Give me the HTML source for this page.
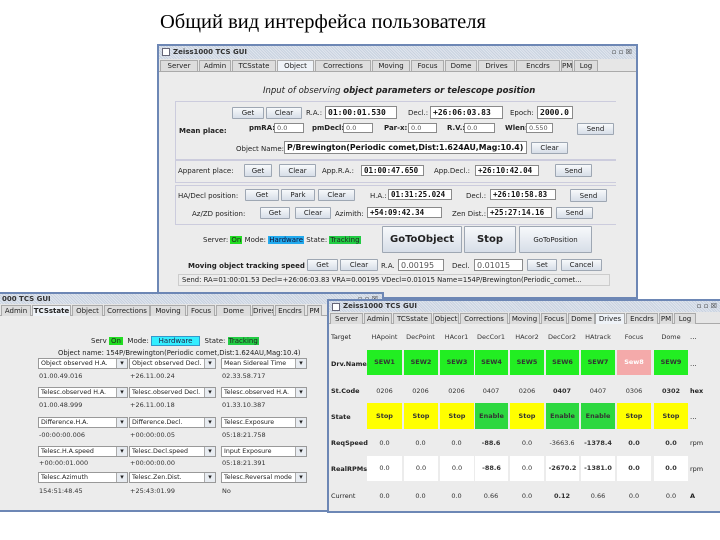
<!DOCTYPE html>
<html><head><meta charset="utf-8"><style>
*{margin:0;padding:0;box-sizing:border-box}
body{width:720px;height:540px;background:#fff;position:relative;overflow:hidden;font-family:"DejaVu Sans","Liberation Sans",sans-serif;font-size:7px;color:#222}
div,span{position:absolute;white-space:nowrap}
.win{background:#ececec;border:2px solid #6d87b5}
.tb{background:repeating-linear-gradient(45deg,#c9d2df 0 1px,#dfe5ee 1px 2px);color:#333;font-weight:bold;font-size:7px;line-height:11px;padding-left:14px}
.tb i{position:absolute;left:3px;top:2px;width:8px;height:8px;background:#fff;border:1px solid #667}
.tabs{background:#e6e6e6;border-bottom:1px solid #aaa}
.tab{top:1px;height:11px;border:1px solid #aaa;border-bottom:none;background:#ddd;font-size:7px;line-height:10px;text-align:center;overflow:hidden}
.tab.s{background:#eef2f7;font-weight:normal}
.b{border:1px solid #9ea7b3;background:linear-gradient(#f7f9fb,#d7dee8);text-align:center;font-size:7px;border-radius:1px}
.f{background:#fff;border:1px solid #8a8a8a;font-size:6.5px;padding-left:2px;color:#555;overflow:hidden}
.fb{font-weight:bold;font-size:8px;color:#111;font-family:"DejaVu Sans Mono","Liberation Mono",monospace}
.c{background:#fff;border:1px solid #999;font-size:6.3px;padding-left:2px;line-height:10px;overflow:hidden}
.c:after{content:"▾";position:absolute;right:0;top:0;width:10px;height:9px;border-left:1px solid #aaa;text-align:center;background:#e8ecf1;font-size:7px;line-height:9px}
.v{font-size:6.5px;color:#333}
.cell{text-align:center;font-size:6.5px;font-weight:bold;color:#333}
.g{background:#22ee22}.y{background:#ffff00}
</style></head><body>
<div style="left:160px;top:11px;font-family:'Liberation Serif',serif;font-size:20.5px;color:#000">Общий вид интерфейса пользователя</div>

<!-- main window -->
<div class="win" style="left:157px;top:44px;width:481px;height:255px">
<div class="tb" style="left:0;top:0;width:477px;height:13px;line-height:13px"><i></i>Zeiss1000 TCS GUI<span style="right:4px;top:0;font-weight:normal">▫ ▫ ☒</span></div>
<div class="tabs" style="left:0;top:13px;width:477px;height:13px">
<span class="tab" style="left:1px;width:38px">Server</span><span class="tab" style="left:40px;width:32px">Admin</span><span class="tab" style="left:73px;width:44px">TCSstate</span><span class="tab s" style="left:118px;width:37px">Object</span><span class="tab" style="left:156px;width:56px">Corrections</span><span class="tab" style="left:213px;width:38px">Moving</span><span class="tab" style="left:252px;width:33px">Focus</span><span class="tab" style="left:286px;width:32px">Dome</span><span class="tab" style="left:319px;width:37px">Drives</span><span class="tab" style="left:357px;width:44px">Encdrs</span><span class="tab" style="left:402px;width:12px">PM</span><span class="tab" style="left:415px;width:24px">Log</span>
</div>
</div>
<div style="left:263px;top:86px;font-style:italic;font-size:8.5px;color:#222">Input of observing <b>object parameters or telescope position</b></div>
<div style="left:175px;top:101px;width:441px;height:59px;border:1px solid #ccd;border-right:none"></div>
<div class="b" style="left:232px;top:107px;width:32px;height:12px;line-height:11px">Get</div>
<div class="b" style="left:266px;top:107px;width:36px;height:12px;line-height:11px">Clear</div>
<div style="left:306px;top:109px">R.A.:</div>
<div class="f fb" style="left:325px;top:106px;width:72px;height:13px;line-height:12px">01:00:01.530</div>
<div style="left:408px;top:109px">Decl.:</div>
<div class="f fb" style="left:430px;top:106px;width:73px;height:13px;line-height:12px">+26:06:03.83</div>
<div style="left:510px;top:109px">Epoch:</div>
<div class="f fb" style="left:537px;top:106px;width:36px;height:13px;line-height:12px">2000.0</div>
<div style="left:179px;top:127px;font-weight:bold">Mean place:</div>
<div style="left:249px;top:124px;font-weight:bold">pmRA:</div><div class="f" style="left:274px;top:123px;width:30px;height:10px;line-height:9px">0.0</div>
<div style="left:312px;top:124px;font-weight:bold">pmDecl:</div><div class="f" style="left:343px;top:123px;width:30px;height:10px;line-height:9px">0.0</div>
<div style="left:384px;top:124px;font-weight:bold">Par-x:</div><div class="f" style="left:408px;top:123px;width:29px;height:10px;line-height:9px">0.0</div>
<div style="left:447px;top:124px;font-weight:bold">R.V.:</div><div class="f" style="left:464px;top:123px;width:31px;height:10px;line-height:9px">0.0</div>
<div style="left:505px;top:124px;font-weight:bold">Wlen:</div><div class="f" style="left:526px;top:123px;width:27px;height:10px;line-height:9px">0.550</div>
<div class="b" style="left:577px;top:123px;width:37px;height:12px;line-height:11px">Send</div>
<div style="left:236px;top:145px">Object Name:</div>
<div class="f" style="left:284px;top:141px;width:243px;height:13px;line-height:12px;font-weight:bold;font-size:7.8px;color:#111">P/Brewington(Periodic comet,Dist:1.624AU,Mag:10.4)</div>
<div class="b" style="left:531px;top:142px;width:37px;height:12px;line-height:11px">Clear</div>
<div style="left:175px;top:160px;width:441px;height:23px;border:1px solid #ccd;border-right:none"></div>
<div style="left:178px;top:167px">Apparent place:</div>
<div class="b" style="left:244px;top:164px;width:28px;height:13px;line-height:12px">Get</div>
<div class="b" style="left:279px;top:164px;width:37px;height:13px;line-height:12px">Clear</div>
<div style="left:322px;top:167px">App.R.A.:</div>
<div class="f fb" style="left:361px;top:165px;width:63px;height:11px;line-height:10px;font-size:7.5px">01:00:47.650</div>
<div style="left:434px;top:167px">App.Decl.:</div>
<div class="f fb" style="left:475px;top:165px;width:64px;height:11px;line-height:10px;font-size:7.5px">+26:10:42.04</div>
<div class="b" style="left:555px;top:164px;width:37px;height:13px;line-height:12px">Send</div>
<div style="left:175px;top:185px;width:441px;height:40px;border:1px solid #ccd;border-right:none"></div>
<div style="left:178px;top:192px">HA/Decl position:</div>
<div class="b" style="left:245px;top:189px;width:34px;height:12px;line-height:11px">Get</div>
<div class="b" style="left:281px;top:189px;width:34px;height:12px;line-height:11px">Park</div>
<div class="b" style="left:318px;top:189px;width:37px;height:12px;line-height:11px">Clear</div>
<div style="left:370px;top:192px">H.A.:</div>
<div class="f fb" style="left:388px;top:189px;width:64px;height:11px;line-height:10px;font-size:7.5px">01:31:25.024</div>
<div style="left:466px;top:192px">Decl.:</div>
<div class="f fb" style="left:490px;top:189px;width:66px;height:11px;line-height:10px;font-size:7.5px">+26:10:58.83</div>
<div class="b" style="left:570px;top:189px;width:37px;height:13px;line-height:12px">Send</div>
<div style="left:192px;top:210px">Az/ZD position:</div>
<div class="b" style="left:260px;top:207px;width:30px;height:12px;line-height:11px">Get</div>
<div class="b" style="left:295px;top:207px;width:36px;height:12px;line-height:11px">Clear</div>
<div style="left:335px;top:210px">Azimith:</div>
<div class="f fb" style="left:367px;top:207px;width:75px;height:11px;line-height:10px;font-size:7.5px">+54:09:42.34</div>
<div style="left:452px;top:210px">Zen Dist.:</div>
<div class="f fb" style="left:487px;top:207px;width:65px;height:11px;line-height:10px;font-size:7.5px">+25:27:14.16</div>
<div class="b" style="left:556px;top:207px;width:37px;height:12px;line-height:11px">Send</div>
<div style="left:203px;top:236px">Server: <span style="position:static;background:#2d2;padding:0 1px">On</span> Mode: <span style="position:static;background:#2ae;color:#113;padding:0 1px">Hardware</span> State: <span style="position:static;background:#2c4;padding:0 1px">Tracking</span></div>
<div class="b" style="left:382px;top:226px;width:80px;height:27px;line-height:26px;font-weight:bold;font-size:10px">GoToObject</div>
<div class="b" style="left:464px;top:226px;width:52px;height:27px;line-height:26px;font-weight:bold;font-size:10px">Stop</div>
<div class="b" style="left:519px;top:226px;width:73px;height:27px;line-height:26px;font-size:7px">GoToPosition</div>
<div style="left:188px;top:262px;font-weight:bold">Moving object tracking speed</div>
<div class="b" style="left:307px;top:259px;width:31px;height:12px;line-height:11px">Get</div>
<div class="b" style="left:340px;top:259px;width:38px;height:12px;line-height:11px">Clear</div>
<div style="left:381px;top:262px">R.A.</div>
<div class="f" style="left:398px;top:259px;width:46px;height:12px;line-height:11px;font-size:8px">0.00195</div>
<div style="left:452px;top:262px">Decl.</div>
<div class="f" style="left:474px;top:259px;width:49px;height:12px;line-height:11px;font-size:8px">0.01015</div>
<div class="b" style="left:527px;top:259px;width:30px;height:12px;line-height:11px">Set</div>
<div class="b" style="left:561px;top:259px;width:41px;height:12px;line-height:11px">Cancel</div>
<div style="left:178px;top:274px;width:432px;height:12px;border:1px solid #ccc;padding-left:3px;line-height:11px;font-size:6.8px">Send: RA=01:00:01.53 Decl=+26:06:03.83 VRA=0.00195 VDecl=0.01015 Name=154P/Brewington(Periodic_comet...</div>

<!-- left window -->
<div class="win" style="left:-2px;top:292px;width:386px;height:220px">
<div class="tb" style="left:0;top:0;width:382px;height:10px;line-height:10px;padding-left:2px">000 TCS GUI<span style="right:4px;top:0;font-weight:normal">▫ ▫ ☒</span></div>
<div class="tabs" style="left:0;top:10px;width:382px;height:12px">
<span class="tab" style="left:1px;width:30px">Admin</span><span class="tab s" style="left:32px;width:39px;font-weight:bold">TCSstate</span><span class="tab" style="left:72px;width:31px">Object</span><span class="tab" style="left:104px;width:46px">Corrections</span><span class="tab" style="left:150px;width:36px">Moving</span><span class="tab" style="left:187px;width:28px">Focus</span><span class="tab" style="left:216px;width:35px">Dome</span><span class="tab" style="left:252px;width:22px">Drives</span><span class="tab" style="left:275px;width:30px">Encdrs</span><span class="tab" style="left:307px;width:15px">PM</span>
</div>
</div>
<div style="left:91px;top:336px">Serv <span style="position:static;background:#2d2;padding:0 2px">On</span> &nbsp;Mode: <span style="position:static;display:inline-block;width:49px;text-align:center;background:#3ef;border:1px solid #39c;color:#224">Hardware</span> &nbsp;State: <span style="position:static;background:#2c4;padding:0 1px">Tracking</span></div>
<div style="left:58px;top:349px;font-size:6.8px">Object name: 154P/Brewington(Periodic comet,Dist:1.624AU,Mag:10.4)</div>
<div class="c" style="left:38px;top:358px;width:90px;height:11px">Object observed H.A.</div>
<div class="c" style="left:129px;top:358px;width:87px;height:11px">Object observed Decl.</div>
<div class="c" style="left:221px;top:358px;width:86px;height:11px">Mean Sidereal Time</div>
<div class="v" style="left:39px;top:372px">01.00.49.016</div><div class="v" style="left:130px;top:372px">+26.11.00.24</div><div class="v" style="left:222px;top:372px">02.33.58.717</div>
<div class="c" style="left:38px;top:387px;width:90px;height:11px">Telesc.observed H.A.</div>
<div class="c" style="left:129px;top:387px;width:87px;height:11px">Telesc.observed Decl.</div>
<div class="c" style="left:221px;top:387px;width:86px;height:11px">Telesc.observed H.A.</div>
<div class="v" style="left:39px;top:401px">01.00.48.999</div><div class="v" style="left:130px;top:401px">+26.11.00.18</div><div class="v" style="left:222px;top:401px">01.33.10.387</div>
<div class="c" style="left:38px;top:417px;width:90px;height:11px">Difference.H.A.</div>
<div class="c" style="left:129px;top:417px;width:87px;height:11px">Difference.Decl.</div>
<div class="c" style="left:221px;top:417px;width:86px;height:11px">Telesc.Exposure</div>
<div class="v" style="left:39px;top:431px">-00:00:00.006</div><div class="v" style="left:130px;top:431px">+00:00:00.05</div><div class="v" style="left:222px;top:431px">05:18:21.758</div>
<div class="c" style="left:38px;top:446px;width:90px;height:11px">Telesc.H.A.speed</div>
<div class="c" style="left:129px;top:446px;width:87px;height:11px">Telesc.Decl.speed</div>
<div class="c" style="left:221px;top:446px;width:86px;height:11px">Input Exposure</div>
<div class="v" style="left:39px;top:459px">+00:00:01.000</div><div class="v" style="left:130px;top:459px">+00:00:00.00</div><div class="v" style="left:222px;top:459px">05:18:21.391</div>
<div class="c" style="left:38px;top:472px;width:90px;height:11px">Telesc.Azimuth</div>
<div class="c" style="left:129px;top:472px;width:87px;height:11px">Telesc.Zen.Dist.</div>
<div class="c" style="left:221px;top:472px;width:86px;height:11px">Telesc.Reversal mode</div>
<div class="v" style="left:39px;top:487px">154:51:48.45</div><div class="v" style="left:130px;top:487px">+25:43:01.99</div><div class="v" style="left:222px;top:487px">No</div>

<!-- right window -->
<div class="win" style="left:327px;top:299px;width:396px;height:214px">
<div class="tb" style="left:0;top:0;width:392px;height:11px"><i></i>Zeiss1000 TCS GUI<span style="right:4px;top:0;font-weight:normal">▫ ▫ ☒</span></div>
<div class="tabs" style="left:0;top:11px;width:392px;height:12px">
<span class="tab" style="left:1px;width:33px">Server</span><span class="tab" style="left:35px;width:28px">Admin</span><span class="tab" style="left:64px;width:39px">TCSstate</span><span class="tab" style="left:104px;width:26px">Object</span><span class="tab" style="left:131px;width:48px">Corrections</span><span class="tab" style="left:180px;width:31px">Moving</span><span class="tab" style="left:212px;width:26px">Focus</span><span class="tab" style="left:239px;width:27px">Dome</span><span class="tab s" style="left:266px;width:30px">Drives</span><span class="tab" style="left:297px;width:32px">Encdrs</span><span class="tab" style="left:330px;width:14px">PM</span><span class="tab" style="left:345px;width:22px">Log</span>
</div>
</div>
<div style="left:331px;top:333px;font-size:6.5px">Target</div>
<div style="left:331px;top:360px;font-size:6.5px;font-weight:bold">Drv.Name</div>
<div style="left:331px;top:387px;font-size:6.5px;font-weight:bold">St.Code</div>
<div style="left:331px;top:413px;font-size:6.5px;font-weight:bold">State</div>
<div style="left:331px;top:439px;font-size:6.5px;font-weight:bold">ReqSpeed</div>
<div style="left:331px;top:465px;font-size:6.5px;font-weight:bold">RealRPMs</div>
<div style="left:331px;top:492px;font-size:6.5px">Current</div>
<div style="left:690px;top:333px">...</div><div style="left:690px;top:360px">...</div><div style="left:690px;top:387px;font-size:6.5px;font-weight:bold">hex</div><div style="left:690px;top:413px">...</div><div style="left:690px;top:439px;font-size:6.5px">rpm</div><div style="left:690px;top:465px;font-size:6.5px">rpm</div><div style="left:690px;top:492px;font-size:6.5px;font-weight:bold">A</div>

<div class="cell" style="left:367px;top:333px;width:35px;font-weight:normal">HApoint</div>
<div class="cell" style="left:403px;top:333px;width:35px;font-weight:normal">DecPoint</div>
<div class="cell" style="left:439px;top:333px;width:35px;font-weight:normal">HAcor1</div>
<div class="cell" style="left:474px;top:333px;width:34px;font-weight:normal">DecCor1</div>
<div class="cell" style="left:510px;top:333px;width:34px;font-weight:normal">HAcor2</div>
<div class="cell" style="left:545px;top:333px;width:34px;font-weight:normal">DecCor2</div>
<div class="cell" style="left:581px;top:333px;width:34px;font-weight:normal">HAtrack</div>
<div class="cell" style="left:617px;top:333px;width:34px;font-weight:normal">Focus</div>
<div class="cell" style="left:654px;top:333px;width:34px;font-weight:normal">Dome</div>

<div class="cell g" style="left:367px;top:350px;width:35px;height:25px;line-height:25px">SEW1</div>
<div class="cell g" style="left:404px;top:350px;width:34px;height:25px;line-height:25px">SEW2</div>
<div class="cell g" style="left:440px;top:350px;width:34px;height:25px;line-height:25px">SEW3</div>
<div class="cell g" style="left:475px;top:350px;width:33px;height:25px;line-height:25px">SEW4</div>
<div class="cell g" style="left:510px;top:350px;width:34px;height:25px;line-height:25px">SEW5</div>
<div class="cell g" style="left:546px;top:350px;width:33px;height:25px;line-height:25px">SEW6</div>
<div class="cell g" style="left:581px;top:350px;width:34px;height:25px;line-height:25px">SEW7</div>
<div class="cell" style="left:617px;top:350px;width:34px;height:25px;line-height:25px;background:#f4aaaa;color:#fff">Sew8</div>
<div class="cell g" style="left:654px;top:350px;width:34px;height:25px;line-height:25px">SEW9</div>

<div class="cell" style="left:367px;top:387px;width:35px;font-weight:normal">0206</div>
<div class="cell" style="left:403px;top:387px;width:35px;font-weight:normal">0206</div>
<div class="cell" style="left:439px;top:387px;width:35px;font-weight:normal">0206</div>
<div class="cell" style="left:474px;top:387px;width:34px;font-weight:normal">0407</div>
<div class="cell" style="left:510px;top:387px;width:34px;font-weight:normal">0206</div>
<div class="cell" style="left:545px;top:387px;width:34px">0407</div>
<div class="cell" style="left:581px;top:387px;width:34px;font-weight:normal">0407</div>
<div class="cell" style="left:617px;top:387px;width:34px;font-weight:normal">0306</div>
<div class="cell" style="left:654px;top:387px;width:34px">0302</div>

<div class="cell y" style="left:367px;top:403px;width:35px;height:26px;line-height:26px">Stop</div>
<div class="cell y" style="left:404px;top:403px;width:34px;height:26px;line-height:26px">Stop</div>
<div class="cell y" style="left:440px;top:403px;width:34px;height:26px;line-height:26px">Stop</div>
<div class="cell" style="left:475px;top:403px;width:33px;height:26px;line-height:26px;background:#2dd840">Enable</div>
<div class="cell y" style="left:510px;top:403px;width:34px;height:26px;line-height:26px">Stop</div>
<div class="cell" style="left:546px;top:403px;width:33px;height:26px;line-height:26px;background:#2dd840">Enable</div>
<div class="cell" style="left:581px;top:403px;width:34px;height:26px;line-height:26px;background:#2dd840">Enable</div>
<div class="cell y" style="left:617px;top:403px;width:34px;height:26px;line-height:26px">Stop</div>
<div class="cell y" style="left:654px;top:403px;width:34px;height:26px;line-height:26px">Stop</div>

<div class="cell" style="left:367px;top:439px;width:35px;font-weight:normal">0.0</div>
<div class="cell" style="left:403px;top:439px;width:35px;font-weight:normal">0.0</div>
<div class="cell" style="left:439px;top:439px;width:35px;font-weight:normal">0.0</div>
<div class="cell" style="left:474px;top:439px;width:34px">-88.6</div>
<div class="cell" style="left:510px;top:439px;width:34px;font-weight:normal">0.0</div>
<div class="cell" style="left:545px;top:439px;width:34px;font-weight:normal">-3663.6</div>
<div class="cell" style="left:581px;top:439px;width:34px">-1378.4</div>
<div class="cell" style="left:617px;top:439px;width:34px">0.0</div>
<div class="cell" style="left:654px;top:439px;width:34px">0.0</div>

<div class="cell" style="left:367px;top:456px;width:35px;height:25px;line-height:25px;background:#fff;font-weight:normal">0.0</div>
<div class="cell" style="left:404px;top:456px;width:34px;height:25px;line-height:25px;background:#fff;font-weight:normal">0.0</div>
<div class="cell" style="left:440px;top:456px;width:34px;height:25px;line-height:25px;background:#fff;font-weight:normal">0.0</div>
<div class="cell" style="left:475px;top:456px;width:33px;height:25px;line-height:25px;background:#fff">-88.6</div>
<div class="cell" style="left:510px;top:456px;width:34px;height:25px;line-height:25px;background:#fff;font-weight:normal">0.0</div>
<div class="cell" style="left:546px;top:456px;width:33px;height:25px;line-height:25px;background:#fff">-2670.2</div>
<div class="cell" style="left:581px;top:456px;width:34px;height:25px;line-height:25px;background:#fff">-1381.0</div>
<div class="cell" style="left:617px;top:456px;width:34px;height:25px;line-height:25px;background:#fff">0.0</div>
<div class="cell" style="left:654px;top:456px;width:34px;height:25px;line-height:25px;background:#fff">0.0</div>

<div class="cell" style="left:367px;top:492px;width:35px;font-weight:normal">0.0</div>
<div class="cell" style="left:403px;top:492px;width:35px;font-weight:normal">0.0</div>
<div class="cell" style="left:439px;top:492px;width:35px;font-weight:normal">0.0</div>
<div class="cell" style="left:474px;top:492px;width:34px;font-weight:normal">0.66</div>
<div class="cell" style="left:510px;top:492px;width:34px;font-weight:normal">0.0</div>
<div class="cell" style="left:545px;top:492px;width:34px">0.12</div>
<div class="cell" style="left:581px;top:492px;width:34px;font-weight:normal">0.66</div>
<div class="cell" style="left:617px;top:492px;width:34px;font-weight:normal">0.0</div>
<div class="cell" style="left:654px;top:492px;width:34px;font-weight:normal">0.0</div>
</body></html>
